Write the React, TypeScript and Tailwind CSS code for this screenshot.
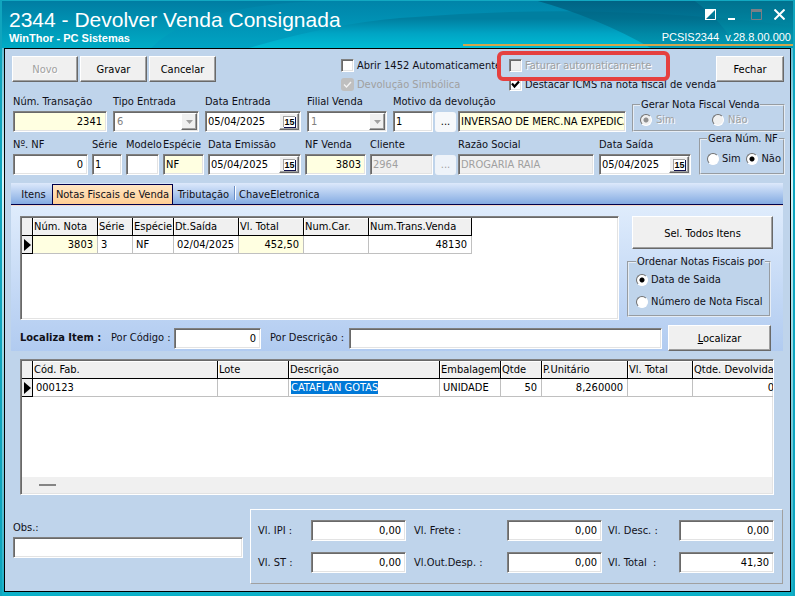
import type { ReactNode } from "react";
import clsx from "clsx";

const sunken =
  "border border-t-[#808080] border-l-[#808080] border-r-white border-b-white shadow-[inset_1px_1px_0_#696969,inset_-1px_-1px_0_#e3e3e3]";
const raised =
  "border border-t-white border-l-white border-r-[#696969] border-b-[#696969] shadow-[inset_-1px_-1px_0_#a0a0a0] bg-[#f0f0f0]";

interface ButtonProps {
  children: ReactNode
  className?: string
  disabled?: boolean
}

function Button({ children, className, disabled }: ButtonProps) {
  return (
    <button
      type="button"
      disabled={disabled}
      className={clsx(raised, "shrink-0 pt-0.5 text-black disabled:text-[#a0a0a0] disabled:[text-shadow:1px_1px_0_#fff]", className)}
    >
      {children}
    </button>
  );
}

interface FieldProps {
  id: string
  label: string
  className?: string
  children: ReactNode
}

function Field({ id, label, className, children }: FieldProps) {
  return (
    <div className={clsx("flex flex-col gap-0.5", className)}>
      <label htmlFor={id} className="h-3.5 whitespace-nowrap">{label}</label>
      {children}
    </div>
  );
}

interface TextBoxProps {
  id: string
  value?: string
  right?: boolean
  yellow?: boolean
  disabled?: boolean
  label?: string
  className?: string
}

function TextBox({ id, value, right, yellow, disabled, label, className }: TextBoxProps) {
  return (
    <input
      id={id}
      type="text"
      defaultValue={value}
      disabled={disabled}
      aria-label={label}
      className={clsx(
        sunken,
        "h-[21px] w-full min-w-0 pl-0.5 text-black outline-none disabled:bg-[#f0f0f0] disabled:text-[#a0a0a0]",
        right ? "pr-1 text-right" : "pr-px",
        yellow ? "bg-[#ffffe1]" : "bg-white",
        className,
      )}
    />
  );
}

function DateBox({ id, value }: { id: string, value: string }) {
  return (
    <div className={clsx(sunken, "flex h-[21px] bg-white p-px")}>
      <input id={id} type="text" defaultValue={value} className="w-full min-w-0 flex-1 pl-px text-black outline-none" />
      <button type="button" aria-label="Calendário" className={clsx(raised, "flex w-5 shrink-0 items-center justify-center")}>
        <span className="flex h-[11px] w-3 items-center justify-center border-t border-l border-[#a0a0a0] bg-white font-['Liberation_Sans',sans-serif] text-[9px] font-bold leading-none text-black shadow-[1px_1px_0_#10104a]">
          15
        </span>
      </button>
    </div>
  );
}

function Dropdown({ id, value }: { id: string, value: string }) {
  return (
    <div className={clsx(sunken, "relative h-[21px] bg-white p-px")}>
      <select id={id} disabled className="h-full w-full appearance-none pl-0.5 text-[#808080] opacity-100">
        <option>{value}</option>
      </select>
      <span className={clsx(raised, "pointer-events-none absolute top-px right-px bottom-px flex w-4 items-center justify-center")}>
        <svg width="7" height="4" viewBox="0 0 7 4">
          <path d="M0 0H7L3.5 4Z" fill="#a0a0a0" />
        </svg>
      </span>
    </div>
  );
}

interface CheckProps {
  label: string
  checked?: boolean
  disabled?: boolean
  soft?: boolean
}

function Check({ label, checked, disabled, soft }: CheckProps) {
  return (
    <label className={clsx("flex h-[19px] items-center gap-[3px] whitespace-nowrap", disabled && "text-[#a0a0a0]", disabled && !soft && "[text-shadow:1px_1px_0_#fff]")}>
      <span className="relative h-[13px] w-[13px]">
        <input
          type="checkbox"
          defaultChecked={checked}
          disabled={disabled}
          className={clsx(
            "block h-[13px] w-[13px] appearance-none",
            soft ? "rounded-[3px] bg-[#bfbfbf]" : sunken,
            !soft && (disabled ? "bg-[#f0f0f0]" : "bg-white"),
          )}
        />
        {checked && (
          <svg className="pointer-events-none absolute inset-0" width="13" height="13" viewBox="0 0 13 13" fill="none">
            <path d={soft ? "M3 6.5L5.5 9L10 4" : "M3 5.5L5.5 8.5L10 3.5"} stroke={soft ? "#f4f4f4" : "#000"} strokeWidth={soft ? 1.3 : 2.2} />
          </svg>
        )}
      </span>
      {label}
    </label>
  );
}

interface RadioProps {
  name: string
  label: string
  checked?: boolean
  disabled?: boolean
  className?: string
}

function Radio({ name, label, checked, disabled, className }: RadioProps) {
  return (
    <label className={clsx("flex items-center whitespace-nowrap", disabled && "text-[#a0a0a0] [text-shadow:1px_1px_0_#fff]", className)}>
      <input
        type="radio"
        name={name}
        defaultChecked={checked}
        disabled={disabled}
        className="h-3 w-3 shrink-0 appearance-none rounded-full border border-t-[#707070] border-l-[#707070] border-r-white border-b-white bg-white checked:bg-[radial-gradient(circle,#000_2px,#fff_3px)] disabled:bg-[#f0f0f0] disabled:checked:bg-[radial-gradient(circle,#909090_2px,#f0f0f0_3px)]"
      />
      {label}
    </label>
  );
}

function Group({ title, className, children }: { title: string, className?: string, children: ReactNode }) {
  return (
    <fieldset className={clsx("min-w-0 shrink-0 border-2 border-[#e6edf5] [border-style:groove]", className)}>
      <legend className="h-3.5 whitespace-nowrap px-px">{title}</legend>
      {children}
    </fieldset>
  );
}

interface Column {
  title: string
  value: string
  width: string
  right?: boolean
  yellow?: boolean
  selected?: boolean
}

const notas: Column[] = [
  { title: "Núm. Nota", value: "3803", width: "w-[65px]", right: true, yellow: true },
  { title: "Série", value: "3", width: "w-[35px]" },
  { title: "Espécie", value: "NF", width: "w-[41px]" },
  { title: "Dt.Saída", value: "02/04/2025", width: "w-[65px]" },
  { title: "Vl. Total", value: "452,50", width: "w-[65px]", right: true, yellow: true },
  { title: "Num.Car.", value: "", width: "w-[65px]" },
  { title: "Num.Trans.Venda", value: "48130", width: "w-[103px]", right: true },
];

const itens: Column[] = [
  { title: "Cód. Fab.", value: "000123", width: "w-[185px]" },
  { title: "Lote", value: "", width: "w-[71px]" },
  { title: "Descrição", value: "CATAFLAN GOTAS", width: "w-[151px]", selected: true },
  { title: "Embalagem", value: "UNIDADE", width: "w-[61px]" },
  { title: "Qtde", value: "50", width: "w-[41px]", right: true },
  { title: "P.Unitário", value: "8,260000", width: "w-[86px]", right: true },
  { title: "Vl. Total", value: "", width: "w-[65px]" },
  { title: "Qtde. Devolvida", value: "0", width: "w-[86px]", right: true },
];

function DataGrid({ columns }: { columns: Column[] }) {
  return (
    <table className="w-max table-fixed border-separate border-spacing-0 text-black">
      <thead>
        <tr className="h-[18px]">
          <th className="w-[11px] border-r border-b border-black bg-[#f0f0f0] p-0" />
          {columns.map((c) => (
            <th
              key={c.title}
              scope="col"
              className={clsx(c.width, "whitespace-nowrap border-r border-b border-black bg-[#f0f0f0] p-0 pl-px text-left font-normal shadow-[inset_1px_1px_0_#fff]")}
            >
              {c.title}
            </th>
          ))}
        </tr>
      </thead>
      <tbody>
        <tr className="h-[18px]">
          <td className="border-r border-b border-black bg-[#f0f0f0] p-0 pl-0.5">
            <svg width="7" height="12" viewBox="0 0 7 12">
              <path d="M0 0L7 6L0 12Z" fill="#000" />
            </svg>
          </td>
          {columns.map((c) => (
            <td
              key={c.title}
              className={clsx(
                "whitespace-nowrap border-r border-b border-[#c0c0c0] p-0",
                c.right ? "pr-1 text-right" : c.selected ? "pl-0.5" : "pl-[3px]",
                c.yellow && "bg-[#ffffe1]",
              )}
            >
              {c.selected ? <span className="bg-[#0078d7] text-white">{c.value}</span> : c.value}
            </td>
          ))}
        </tr>
      </tbody>
    </table>
  );
}

function TitleBar() {
  return (
    <header className="relative flex h-12 justify-between overflow-hidden bg-[#0095b5] font-['Liberation_Sans',Arial,sans-serif] text-white">
      <svg className="absolute inset-0 h-full w-full" viewBox="0 0 795 48" preserveAspectRatio="none">
        <defs>
          <linearGradient id="base" x1="0" y1="0" x2="0" y2="1">
            <stop offset="0" stopColor="#007ca2" />
            <stop offset="1" stopColor="#00acc6" />
          </linearGradient>
          <linearGradient id="sheen" x1="0" y1="0" x2="0" y2="1">
            <stop offset="0" stopColor="#0086ab" />
            <stop offset="1" stopColor="#00a0c2" />
          </linearGradient>
          <linearGradient id="wave" x1="0" y1="0" x2="0" y2="1">
            <stop offset="0.2" stopColor="#007fa0" />
            <stop offset="0.6" stopColor="#00a4c4" />
            <stop offset="1" stopColor="#00bcd4" />
          </linearGradient>
          <linearGradient id="deep" x1="0" y1="0" x2="0" y2="1">
            <stop offset="0" stopColor="#005070" />
            <stop offset="1" stopColor="#008aa4" />
          </linearGradient>
        </defs>
        <rect width="795" height="48" fill="url(#base)" />
        <path d="M150 48Q190 4 340 0H795V48Z" fill="url(#sheen)" opacity="0.7" />
        <path d="M248 48Q330 24 400 18Q520 8 640 13Q730 17 795 26V48Z" fill="url(#wave)" />
        <path d="M535 0Q600 18 652 48H795V0Z" fill="url(#deep)" opacity="0.65" />
        <path d="M695 0Q725 22 738 48H795V0Z" fill="#00a8b8" opacity="0.22" />
        <rect width="795" height="1" fill="#12a9c2" />
      </svg>
      <div className="relative flex flex-col pt-2 pl-[7px]">
        <h1 className="h-[23px] whitespace-nowrap text-[21px] leading-[23px]">2344 - Devolver Venda Consignada</h1>
        <p className="text-[11px] font-bold leading-[14px]">WinThor - PC Sistemas</p>
      </div>
      <div className="relative flex flex-1 flex-col items-end">
        <div className="flex gap-3 pt-[9px] pr-2">
          <button type="button" aria-label="Alternar">
            <svg width="11" height="11" viewBox="0 0 11 11">
              <path d="M0 0H11L0 11Z" fill="#fff" />
              <path d="M10.500 0V10.500H0" fill="none" stroke="#fff" />
            </svg>
          </button>
          <button type="button" aria-label="Minimizar">
            <svg width="11" height="11" viewBox="0 0 11 11">
              <path d="M0 9H7V11H0Z" fill="#fff" />
            </svg>
          </button>
          <button type="button" aria-label="Maximizar" disabled>
            <svg width="11" height="11" viewBox="0 0 11 11" fill="none" stroke="#7b7f86">
              <path d="M.5 .5H10.500V10.500H.5Z" />
              <path d="M0 1.500H11" strokeWidth="3" />
            </svg>
          </button>
          <button type="button" aria-label="Fechar janela">
            <svg width="11" height="11" viewBox="0 0 11 11" stroke="#fff" strokeWidth="2">
              <path d="M.5 .5L10.500 10.500M10.500 .5L.5 10.500" />
            </svg>
          </button>
        </div>
        <p className="mt-[11px] flex gap-1.5 pr-0.5 text-[11px] leading-[13px]">
          <span>PCSIS2344</span>
          <span>v.28.8.00.000</span>
        </p>
        <div className="h-0.5 w-[73%] shrink-0 bg-[#d3a64a]" />
      </div>
    </header>
  );
}

export default function App() {
  return (
    <div className="flex min-h-screen flex-col border-x-2 border-[#10a5be] bg-linear-to-b from-[#00a9c6] via-[#d8f6fa] via-30% to-[#08b0c8] font-['DejaVu_Sans_Condensed','Noto_Sans',sans-serif] text-[11px] leading-[14px] text-[#101018]">
      <TitleBar />
      <main className="mx-0.5 mb-1 flex flex-1 flex-col border border-black bg-[#bfd4eb]">
        <div className="flex h-[46px] items-start pt-[7px] pr-1.5 pl-[7px]">
          <div className="flex flex-1 gap-0.5">
            <Button disabled className="h-[26px] w-[66px]">Novo</Button>
            <Button className="h-[26px] w-[67px]">Gravar</Button>
            <Button className="h-[26px] w-[67px]">Cancelar</Button>
          </div>
          <div className="w-[168px]">
            <Check label="Abrir 1452 Automaticamente" />
            <Check label="Devolução Simbólica" checked disabled soft />
          </div>
          <div className="relative w-[207px]">
            <Check label="Faturar automaticamente" disabled />
            <Check label="Destacar ICMS na nota fiscal de venda" checked />
            <div className="pointer-events-none absolute -top-[5px] -left-3 h-[30px] w-[173px] rounded-md border-4 border-[#e5403f]" />
          </div>
          <Button className="h-[26px] w-[68px]">Fechar</Button>
        </div>

        <div className="flex items-end gap-1.5 pr-[5px] pl-2">
          <Field id="transacao" label="Núm. Transação" className="w-[94px]">
            <TextBox id="transacao" value="2341" right yellow />
          </Field>
          <Field id="tipo" label="Tipo Entrada" className="w-[86px]">
            <Dropdown id="tipo" value="6" />
          </Field>
          <Field id="entrada" label="Data Entrada" className="w-24">
            <DateBox id="entrada" value="05/04/2025" />
          </Field>
          <Field id="filial" label="Filial Venda" className="w-20">
            <Dropdown id="filial" value="1" />
          </Field>
          <div className="flex min-w-0 flex-1 items-end gap-0.5">
            <Field id="motivo" label="Motivo da devolução" className="w-10 shrink-0">
              <TextBox id="motivo" value="1" />
            </Field>
            <button type="button" className="h-5 w-[21px] shrink-0 rounded-[3px] bg-[#f6f8fb] text-black">...</button>
            <TextBox id="motivo-desc" label="Descrição do motivo" value="INVERSAO DE MERC.NA EXPEDICAO" yellow />
          </div>
          <Group title="Gerar Nota Fiscal Venda" className="h-[34px] w-[153px] pl-1.5">
            <div className="flex pt-px">
              <Radio name="gerar-nota" label="Sim" checked disabled className="w-[72px] gap-1" />
              <Radio name="gerar-nota" label="Não" disabled className="gap-1" />
            </div>
          </Group>
        </div>

        <div className="flex items-end gap-1 pr-[5px] pl-2">
          <Field id="nf" label="Nº. NF" className="w-[75px]">
            <TextBox id="nf" value="0" right />
          </Field>
          <Field id="serie" label="Série" className="w-[30px]">
            <TextBox id="serie" value="1" />
          </Field>
          <Field id="modelo" label="Modelo" className="w-[33px]">
            <TextBox id="modelo" />
          </Field>
          <Field id="especie" label="Espécie" className="w-[41px]">
            <TextBox id="especie" value="NF" yellow />
          </Field>
          <Field id="emissao" label="Data Emissão" className="w-[93px]">
            <DateBox id="emissao" value="05/04/2025" />
          </Field>
          <Field id="nf-venda" label="NF Venda" className="w-[61px]">
            <TextBox id="nf-venda" value="3803" right yellow />
          </Field>
          <div className="flex min-w-0 flex-1 items-end gap-0.5">
            <Field id="cliente" label="Cliente" className="w-[63px] shrink-0">
              <TextBox id="cliente" value="2964" disabled />
            </Field>
            <button type="button" disabled className="h-5 w-[21px] shrink-0 rounded-[3px] bg-[#eef3f9] text-[#a0a0a0]">...</button>
            <Field id="razao" label="Razão Social" className="min-w-0 flex-1">
              <TextBox id="razao" value="DROGARIA RAIA" disabled />
            </Field>
          </div>
          <Field id="saida" label="Data Saída" className="ml-px w-[92px]">
            <DateBox id="saida" value="05/04/2025" />
          </Field>
          <Group title="Gera Núm. NF" className="ml-1 h-[43px] w-[86px] pr-0.5 pl-1.5">
            <div className="flex justify-between pt-1.5">
              <Radio name="gera-num" label="Sim" className="gap-[3px]" />
              <Radio name="gera-num" label="Não" checked className="gap-[3px]" />
            </div>
          </Group>
        </div>

        <section className="mt-2 mr-[7px] ml-1.5">
          <div role="tablist" className="flex h-[22px] items-end border-b border-[#00004b] bg-linear-to-b from-[#dde9fb] to-[#84abe2]">
            <button type="button" role="tab" className="h-[19px] w-[41px] pl-1">Itens</button>
            <button
              type="button"
              role="tab"
              aria-selected="true"
              className="h-5 w-[121px] whitespace-nowrap border border-b-0 border-[#00004b] bg-linear-to-b from-[#ffe6c4] to-[#ffce94]"
            >
              Notas Fiscais de Venda
            </button>
            <button type="button" role="tab" className="h-[19px] w-[61px]">Tributação</button>
            <span className="mb-1 h-3.5 w-0.5 border-l border-[#6c8fc6] bg-white" />
            <button type="button" role="tab" className="h-[19px] px-[3px]">ChaveEletronica</button>
          </div>
          <div className="border-t border-[#f6d9c8] bg-linear-to-b from-[#dfecfc] to-[#b1cbf0] pr-2.5 pl-[9px]">
            <div className="flex gap-2 pt-2.5">
              <div className={clsx(sunken, "h-[104px] min-w-0 flex-1 overflow-hidden bg-white p-px")}>
                <DataGrid columns={notas} />
              </div>
              <div className="flex w-[146px] flex-col">
                <Button className="ml-[5px] h-[33px]">Sel. Todos Itens</Button>
                <Group title="Ordenar Notas Fiscais por" className="mt-1.5 mr-0.5 h-[62px] bg-[#bfd4eb] pl-[7px]">
                  <Radio name="ordenar" label="Data de Saida" checked className="mt-1 gap-[3px]" />
                  <Radio name="ordenar" label="Número de Nota Fiscal" className="mt-2 gap-[3px]" />
                </Group>
              </div>
            </div>
            <div className="flex items-center pt-[5px]">
              <strong className="w-[91px] whitespace-nowrap">Localiza Item :</strong>
              <label htmlFor="codigo" className="w-[63px] whitespace-nowrap">Por Código :</label>
              <TextBox id="codigo" value="0" right className="max-w-[87px] shrink-0" />
              <label htmlFor="descricao" className="w-[88px] shrink-0 whitespace-nowrap pl-[9px]">Por Descrição :</label>
              <TextBox id="descricao" className="flex-1" />
              <Button className="mr-0.5 ml-1.5 h-[26px] w-[103px]"><u>L</u>ocalizar</Button>
            </div>
          </div>
        </section>

        <section className={clsx(sunken, "mt-2 mr-4 ml-[15px] flex min-h-[136px] flex-1 flex-col justify-between overflow-hidden bg-white p-px")}>
          <DataGrid columns={itens} />
          <div className="flex h-4 items-center bg-[#f0f0f0] pl-[17px]">
            <div className="h-0.5 w-[17px] bg-[#858585]" />
          </div>
        </section>

        <div className="mt-3.5 mr-[7px] mb-[7px] ml-2 flex gap-[7px]">
          <Field id="obs" label="Obs.:" className="w-[230px] pt-3">
            <TextBox id="obs" />
          </Field>
          <div className="grid h-[75px] flex-1 grid-cols-[53px_1fr_101px_1fr_77px_1fr] content-center items-center gap-y-[11px] border border-t-white border-l-white border-r-[#a0a0a0] border-b-[#a0a0a0] pr-2 pl-[7px]">
            <label htmlFor="ipi">Vl. IPI :</label>
            <TextBox id="ipi" value="0,00" right />
            <label htmlFor="frete" className="pl-2">Vl. Frete :</label>
            <TextBox id="frete" value="0,00" right />
            <label htmlFor="desc" className="pl-1.5">Vl. Desc. :</label>
            <TextBox id="desc" value="0,00" right />
            <label htmlFor="st">Vl. ST :</label>
            <TextBox id="st" value="0,00" right />
            <label htmlFor="out" className="pl-2">Vl.Out.Desp. :</label>
            <TextBox id="out" value="0,00" right />
            <label htmlFor="total" className="pl-1.5">Vl. Total &nbsp;:</label>
            <TextBox id="total" value="41,30" right />
          </div>
        </div>
      </main>
    </div>
  );
}
